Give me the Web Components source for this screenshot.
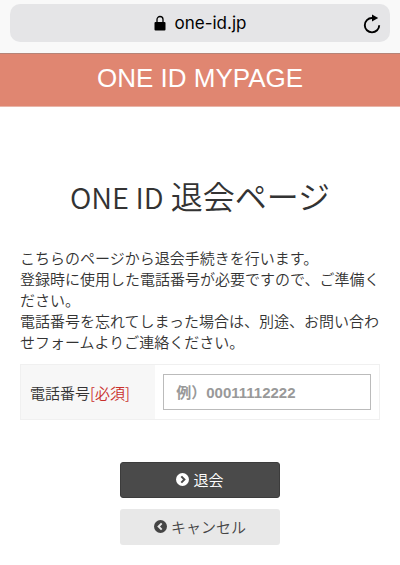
<!DOCTYPE html>
<html lang="ja">
<head>
<meta charset="utf-8">
<meta name="viewport" content="width=device-width, initial-scale=1">
<title>ONE ID 退会ページ</title>
<style>
  :root {
    --brand-color: #e08671;
    --text-color: #333;
    --dark-color: #4a4a4a;
    --light-color: #e8e8e8;
    --line-color: #f0f0f0;
    --required-color: #c9302c;
    --jp-font: "Noto Sans CJK JP", sans-serif;
    --latin-font: "Liberation Sans", "Noto Sans CJK JP", sans-serif;
  }

  body {
    margin: 0;
    background: #fff;
    color: var(--text-color);
    font-family: var(--jp-font);
    font-size: 15px;
    font-weight: 350;
    line-height: 21px;
  }
</style>
</head>
<body>

<address-bar host="one-id.jp"></address-bar>
<site-header>ONE ID MYPAGE</site-header>

<withdraw-page brand="ONE ID" heading="退会ページ">
  <span slot="lead">こちらのページから退会手続きを行います。<br>登録時に使用した電話番号が必要ですので、ご準備ください。<br>電話番号を忘れてしまった場合は、別途、お問い合わせフォームよりご連絡ください。</span>
  <form-field label="電話番号" required-mark="[必須]" placeholder="例）00011112222"></form-field>
  <icon-button slot="actions" variant="dark" icon="next">退会</icon-button>
  <icon-button slot="actions" variant="light" icon="prev">キャンセル</icon-button>
</withdraw-page>

<script>
class AddressBar extends HTMLElement {
    constructor() {
        super();
        this.attachShadow({ mode: "open" });
    }

    connectedCallback() {
        const host = this.getAttribute("host") ?? "";

        this.shadowRoot.innerHTML = `
      <style>
        :host{
          display:block;
          background:#f9f9f9;
          padding:4px 10px 11px;
        }

        .bar{
          display:grid;
          grid-template-columns:1fr auto 1fr;
          align-items:center;
          height:38px;
          padding:0 8px;
          border-radius:10px;
          background:#e5e5e7;
          color:#000;
        }

        .host{
          grid-column:2;
          display:flex;
          align-items:center;
          gap:9px;
          font:400 17px/22px Inter, sans-serif;
        }

        button{
          justify-self:end;
          display:flex;
          padding:0;
          border:0;
          background:none;
          color:inherit;
        }

        svg{
          display:block;
        }
      </style>

      <div class="bar">
        <span class="host">
          <svg width="12" height="16" viewBox="0 0 12 16" aria-hidden="true">
            <path d="M3 8V4.500a3 3 0 0 1 6 0V8" fill="none" stroke="currentColor" stroke-width="1.300"/>
            <rect x=".5" y="7" width="11" height="8.500" rx="1" fill="currentColor"/>
          </svg>
          <span>${host}</span>
        </span>
        <button type="button" aria-label="再読み込み">
          <svg width="20" height="22" viewBox="0 0 20 22" aria-hidden="true">
            <path d="M12 6H10a7.200 7.200 0 1 0 7.200 7.200" fill="none" stroke="currentColor" stroke-width="1.900"/>
            <path d="M10 2.600 16.200 6 10 9.400Z" fill="currentColor"/>
          </svg>
        </button>
      </div>
    `;
    }
}

class SiteHeader extends HTMLElement {
    constructor() {
        super();
        this.attachShadow({ mode: "open" });
    }

    connectedCallback() {
        this.shadowRoot.innerHTML = `
      <style>
        :host{
          display:block;
          border-top:1px solid #b58478;
          border-bottom:1px solid #e9b5a8;
          background:var(--brand-color);
          color:#fff;
          text-align:center;
        }

        header{
          padding:8px 20px 12px;
          font:400 26px/32px var(--latin-font);
        }
      </style>

      <header><slot></slot></header>
    `;
    }
}

class WithdrawPage extends HTMLElement {
    constructor() {
        super();
        this.attachShadow({ mode: "open" });
    }

    connectedCallback() {
        const brand = this.getAttribute("brand") ?? "";
        const heading = this.getAttribute("heading") ?? "";

        this.shadowRoot.innerHTML = `
      <style>
        :host{
          display:block;
          padding:64px 20px 19px;
        }

        h1{
          margin:0 0 27px;
          font-size:32px;
          font-weight:350;
          line-height:48px;
          text-align:center;
        }

        .brand{
          font-size:29px;
        }

        p{
          margin:0 0 12px;
        }

        .actions{
          display:flex;
          flex-direction:column;
          align-items:center;
          gap:11px;
          margin-top:42px;
        }
      </style>

      <main>
        <h1><span class="brand">${brand}</span> ${heading}</h1>
        <p><slot name="lead"></slot></p>
        <form>
          <slot></slot>
          <div class="actions"><slot name="actions"></slot></div>
        </form>
      </main>
    `;
    }
}

class FormField extends HTMLElement {
    constructor() {
        super();
        this.attachShadow({ mode: "open" });
    }

    connectedCallback() {
        const label = this.getAttribute("label") ?? "";
        const mark = this.getAttribute("required-mark") ?? "";
        const placeholder = this.getAttribute("placeholder") ?? "";

        this.shadowRoot.innerHTML = `
      <style>
        :host{
          display:block;
        }

        .row{
          display:grid;
          grid-template-columns:3fr 5fr;
          border:1px solid var(--line-color);
        }

        label{
          display:flex;
          align-items:center;
          padding:0 9px;
          background:#f7f7f7;
          white-space:nowrap;
        }

        .mark{
          color:var(--required-color);
        }

        .control{
          padding:9px 8px;
        }

        input{
          box-sizing:border-box;
          display:block;
          width:100%;
          height:36px;
          padding:0 12px;
          border:1px solid #bbb;
          border-radius:0;
          background:#fff;
          color:var(--text-color);
          font:700 15px/21px var(--latin-font);
        }

        input::placeholder{
          color:#999;
          opacity:1;
        }
      </style>

      <div class="row">
        <label for="field">${label}<span class="mark">${mark}</span></label>
        <div class="control">
          <input id="field" type="tel" placeholder="${placeholder}" required>
        </div>
      </div>
    `;
    }
}

class IconButton extends HTMLElement {
    constructor() {
        super();
        this.attachShadow({ mode: "open" });
    }

    connectedCallback() {
        const dark = this.getAttribute("variant") === "dark";
        const chevron = this.getAttribute("icon") === "prev"
            ? "M7.700 3.400 4.600 6.500l3.100 3.100"
            : "M5.300 3.400l3.100 3.100-3.100 3.100";

        this.shadowRoot.innerHTML = `
      <style>
        :host{
          display:block;
          width:160px;
          --face:${dark ? "var(--dark-color)" : "var(--light-color)"};
          --ink:${dark ? "#fff" : "#444"};
        }

        button{
          display:flex;
          align-items:center;
          justify-content:center;
          gap:4px;
          width:100%;
          height:36px;
          padding:0 0 1px;
          border:${dark ? "1px solid #3c3c3c" : "0"};
          border-radius:3px;
          background:var(--face);
          color:var(--ink);
          font:inherit;
        }
      </style>

      <button type="button">
        <svg width="13" height="13" viewBox="0 0 13 13" aria-hidden="true">
          <circle cx="6.500" cy="6.500" r="6.500" fill="var(--ink)"/>
          <path d="${chevron}" fill="none" stroke="var(--face)" stroke-width="2"/>
        </svg>
        <span><slot></slot></span>
      </button>
    `;
    }
}

customElements.define("address-bar", AddressBar);
customElements.define("site-header", SiteHeader);
customElements.define("withdraw-page", WithdrawPage);
customElements.define("form-field", FormField);
customElements.define("icon-button", IconButton);
</script>
</body>
</html>
